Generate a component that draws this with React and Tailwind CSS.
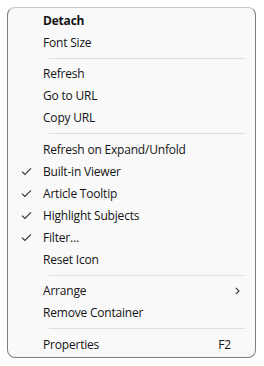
import React from "react";

const Check = () => (
  <svg width="11" height="9" viewBox="0 0 11 9" fill="none">
    <path d="M1 4.6 L3.9 7.5 L10 1.4" stroke="#333" strokeWidth="1.1" />
  </svg>
);

const Item = ({ label, checked, bold, shortcut, sub }) => (
  <div className="flex h-[22px] items-center pl-[13px] pr-[15px]">
    <div className="flex w-[22px] items-center">{checked ? <Check /> : null}</div>
    <div className={"flex-1 " + (bold ? "font-bold" : "")}>{label}</div>
    {shortcut ? <div className="mr-[9px]">{shortcut}</div> : null}
    {sub ? (
      <svg width="5" height="8" viewBox="0 0 5 8" fill="none">
        <path d="M0.8 0.8 L4 4 L0.8 7.2" stroke="#333" strokeWidth="1.1" />
      </svg>
    ) : null}
  </div>
);

const Sep = () => (
  <div className="flex h-[9.5px] items-center pl-[41px] pr-[10px]">
    <div className="h-px flex-1 bg-[#dedede]" />
  </div>
);

export default function App() {
  return (
    <div className="h-[366px] w-[264px] bg-white p-[7px]">
      <div
        className="h-[351px] w-[249px] rounded-[8px] border border-[#7e7e7e] border-t-[#c8c8c8] bg-[#f9f9f9] pt-[1.5px] text-[12px] leading-[16px] tracking-[-0.2px] text-[#141414]"
        style={{ fontFamily: '"Open Sans", "Noto Sans", sans-serif' }}
      >
        <Item label="Detach" bold />
        <Item label="Font Size" />
        <Sep />
        <Item label="Refresh" />
        <Item label="Go to URL" />
        <Item label="Copy URL" />
        <Sep />
        <Item label="Refresh on Expand/Unfold" />
        <Item label="Built-in Viewer" checked />
        <Item label="Article Tooltip" checked />
        <Item label="Highlight Subjects" checked />
        <Item label="Filter..." checked />
        <Item label="Reset Icon" />
        <Sep />
        <Item label="Arrange" sub />
        <Item label="Remove Container" />
        <Sep />
        <Item label="Properties" shortcut="F2" />
      </div>
    </div>
  );
}
